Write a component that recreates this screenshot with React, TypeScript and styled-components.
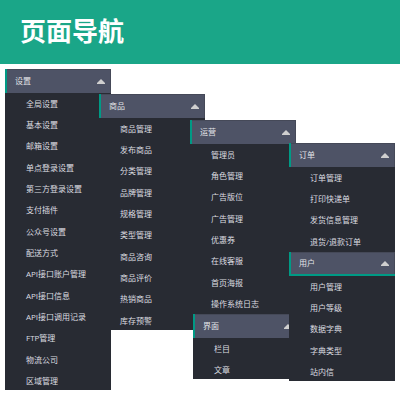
import React, { useState } from "react";
import styled, { createGlobalStyle } from "styled-components";

const GlobalStyle = createGlobalStyle`
  *, *::before, *::after { box-sizing: border-box; }
  body {
    margin: 0;
    background: #ffffff;
    font-family: "Open Sans", "Noto Sans CJK SC", sans-serif;
  }
`;

const Banner = styled.header`
  display: flex;
  align-items: center;
  height: 64px;
  padding: 0 20px 4px;
  background: #1aa688;
`;

const Title = styled.h1`
  margin: 0;
  font-family: "Noto Sans CJK SC", sans-serif;
  font-size: 26px;
  line-height: 32px;
  font-weight: 700;
  color: #ffffff;
`;

const Menus = styled.nav`
  display: flex;
  align-items: flex-start;
  padding: 5px;
`;

const Column = styled.div<{ $drop: number; $overlap: number }>`
  flex: 1 1 0;
  min-width: 0;
  position: relative;
  margin-top: ${(p) => p.$drop}px;
  margin-left: ${(p) => -p.$overlap}px;
`;

const List = styled.ul`
  margin: 0;
  padding: 0;
  list-style: none;
`;

const Item = styled.li`
  height: 21px;
  &:nth-child(3n) {
    height: 22px;
  }
`;

const Panel = styled.section<{ $tail?: boolean; $raised?: boolean }>`
  background: #282b33;
  padding-bottom: ${(p) => (p.$tail ? 15 : 0)}px;
  margin: ${(p) => (p.$raised ? "-15px -2px 0 3px" : "0")};
  &:last-child ${Item}:last-child {
    height: 20px;
  }
`;

const PanelButton = styled.button<{ $active?: boolean }>`
  display: flex;
  align-items: center;
  justify-content: space-between;
  width: 100%;
  height: 24px;
  padding: 0 6px 0 8px;
  border: 0 solid #009a85;
  border-left-width: 2px;
  border-bottom-width: ${(p) => (p.$active ? 2 : 0)}px;
  box-shadow: inset 0 1px #454958, inset -1px 0 #454958;
  background: #4e5366;
  color: #e2e3e6;
  font: inherit;
  font-size: 8px;
  line-height: 12px;
  cursor: pointer;
`;

const Caret = styled.svg<{ $open: boolean }>`
  width: 8px;
  height: 5px;
  fill: #cfcfcf;
  transform: ${(p) => (p.$open ? "none" : "rotate(180deg)")};
`;

const ItemLink = styled.a`
  display: block;
  padding-left: 21px;
  font-size: 8px;
  line-height: 21px;
  white-space: nowrap;
  color: #dcdde0;
  text-decoration: none;
  &:hover {
    color: #ffffff;
  }
`;

type Group = {
  title: string;
  items: string[];
  active?: boolean;
  tail?: boolean;
  raised?: boolean;
};

const columns: { drop: number; overlap: number; groups: Group[] }[] = [
  {
    drop: 0,
    overlap: 0,
    groups: [
      {
        title: "设置",
        items: [
          "全局设置",
          "基本设置",
          "邮箱设置",
          "单点登录设置",
          "第三方登录设置",
          "支付插件",
          "公众号设置",
          "配送方式",
          "API接口账户管理",
          "API接口信息",
          "API接口调用记录",
          "FTP管理",
          "物流公司",
          "区域管理",
        ],
      },
    ],
  },
  {
    drop: 25,
    overlap: 12,
    groups: [
      {
        title: "商品",
        items: [
          "商品管理",
          "发布商品",
          "分类管理",
          "品牌管理",
          "规格管理",
          "类型管理",
          "商品咨询",
          "商品评价",
          "热销商品",
          "库存预警",
        ],
      },
    ],
  },
  {
    drop: 51,
    overlap: 15,
    groups: [
      {
        title: "运营",
        tail: true,
        items: [
          "管理员",
          "角色管理",
          "广告版位",
          "广告管理",
          "优惠券",
          "在线客服",
          "首页海报",
          "操作系统日志",
        ],
      },
      { title: "界面", raised: true, items: ["栏目", "文章"] },
    ],
  },
  {
    drop: 74,
    overlap: 7,
    groups: [
      { title: "订单", items: ["订单管理", "打印快递单", "发货信息管理", "退货/退款订单"] },
      {
        title: "用户",
        active: true,
        items: ["用户管理", "用户等级", "数据字典", "字典类型", "站内信"],
      },
    ],
  },
];

function MenuPanel({ title, items, active, tail, raised }: Group) {
  const [open, setOpen] = useState(true);
  return (
    <Panel $tail={tail} $raised={raised}>
      <PanelButton
        type="button"
        $active={active}
        aria-expanded={open}
        onClick={() => setOpen(!open)}
      >
        {title}
        <Caret $open={open} viewBox="0 0 8 5" aria-hidden="true">
          <path d="M4 0 8 4v1H0V4z" />
        </Caret>
      </PanelButton>
      {open && (
        <List>
          {items.map((item) => (
            <Item key={item}>
              <ItemLink href="#">{item}</ItemLink>
            </Item>
          ))}
        </List>
      )}
    </Panel>
  );
}

export default function App() {
  return (
    <>
      <GlobalStyle />
      <Banner>
        <Title>页面导航</Title>
      </Banner>
      <Menus>
        {columns.map((column) => (
          <Column key={column.drop} $drop={column.drop} $overlap={column.overlap}>
            {column.groups.map((group) => (
              <MenuPanel key={group.title} {...group} />
            ))}
          </Column>
        ))}
      </Menus>
    </>
  );
}
